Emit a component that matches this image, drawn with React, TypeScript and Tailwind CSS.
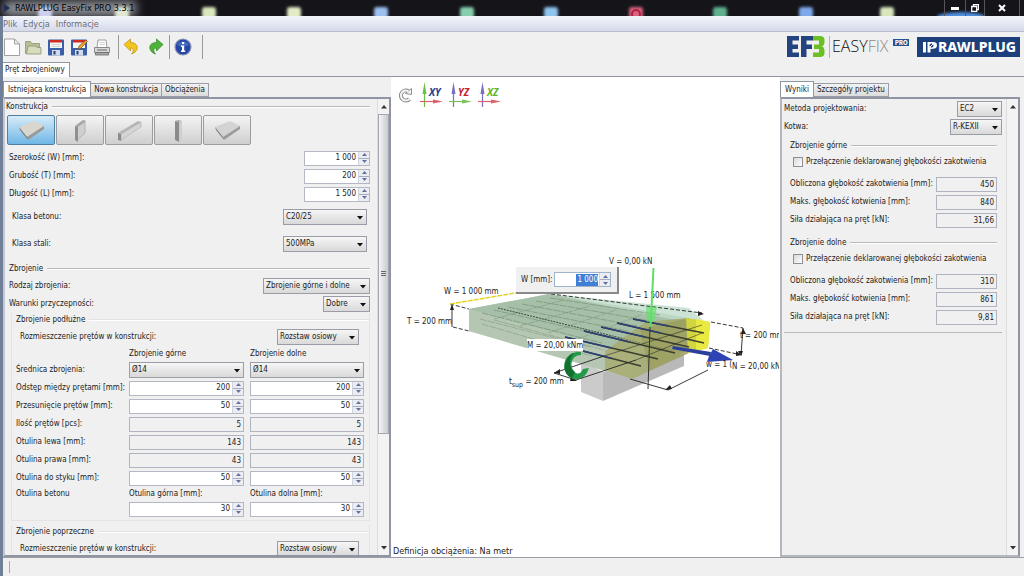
import { useId, type ReactNode } from "react";

const caret = (
  <svg className="pointer-events-none absolute right-1 top-1/2 -translate-y-px" width="6" height="4" viewBox="0 0 6 4">
    <path d="M0 0h6L3 3.5z" fill="#111" />
  </svg>
);

function Pick({ id, value, className, label }: { id: string; value: string; className: string; label?: string }) {
  return (
    <span className={`relative flex h-4 ${className}`}>
      <select
        id={id}
        aria-label={label}
        className="w-full appearance-none border border-[#9a9ca6] bg-linear-to-b from-[#f6f6f6] to-[#d9d9d9] pl-[2px] pr-2 text-[#222] outline-none"
      >
        <option>{value}</option>
      </select>
      {caret}
    </span>
  );
}

function Arrows() {
  return (
    <span className="flex h-full w-[11px] shrink-0 flex-col border-l border-[#d0d4de] bg-[#ecedf2]">
      <button aria-label="Zwiększ" className="flex flex-1 items-center justify-center border-b border-[#a4abc4]">
        <svg width="5" height="3" viewBox="0 0 5 3"><path d="M2.5 0L5 3H0z" fill="#66709a" /></svg>
      </button>
      <button aria-label="Zmniejsz" className="flex flex-1 items-center justify-center">
        <svg width="5" height="3" viewBox="0 0 5 3"><path d="M2.5 3L5 0H0z" fill="#66709a" /></svg>
      </button>
    </span>
  );
}

function Spin({ id, value, className, label }: { id: string; value: string; className: string; label?: string }) {
  return (
    <span className={`flex h-[15px] items-center border border-[#b4b8c4] bg-white ${className}`}>
      <input id={id} aria-label={label} defaultValue={value} className="min-w-0 flex-1 bg-transparent pr-[2px] text-right text-[#222] outline-none" />
      <Arrows />
    </span>
  );
}

function ReadOnly({ id, value, className, label }: { id: string; value: string; className: string; label?: string }) {
  return (
    <input
      id={id}
      aria-label={label}
      readOnly
      value={value}
      className={`h-[15px] border border-[#b0b4c0] bg-[#f0f0f0] pr-[2px] text-right text-[#222] outline-none ${className}`}
    />
  );
}

function GroupTitle({ children, className = "", faint = false }: { children: ReactNode; className?: string; faint?: boolean }) {
  return (
    <div className={`flex items-center gap-1 ${className}`}>
      <span>{children}</span>
      <span className={`h-[2px] flex-1 border-b border-white ${faint ? "bg-[#e2e2e2]" : "bg-[#b9b9b9]"}`} />
    </div>
  );
}

function Tab({ children, active = false }: { children: ReactNode; active?: boolean }) {
  return (
    <button
      role="tab"
      aria-selected={active}
      className={
        active
          ? "h-4 border border-b-0 border-[#8f95a3] bg-white px-1"
          : "h-[14px] border border-l-0 border-[#9a9ca6] bg-linear-to-b from-[#f2f2f2] to-[#dcdcdc] px-[3px]"
      }
    >
      {children}
    </button>
  );
}

const shapes: ReactNode[] = [
  <>
    <path d="M11 11L26 5 36 10 19 21z" fill="#d9d5cf" />
    <path d="M19 21L36 10v3L20 24z" fill="#9b9894" />
    <path d="M11 11l8 10 1 3-8-10z" fill="#7e7c79" />
  </>,
  <>
    <path d="M20 10l8-5v12l-8 7z" fill="#cfcfcf" stroke="#b4b4b4" />
    <path d="M18 10l3 1v15l-3-2z" fill="#8f8f8f" />
    <path d="M18 10l8-6 3 1-8 6z" fill="#a5a5a5" />
  </>,
  <>
    <path d="M15 18L35 6v5L15 24z" fill="#d4d4d4" stroke="#aaa" strokeWidth=".6" />
    <path d="M12 17L32 5l3 1-20 12z" fill="#b5b5b5" />
    <path d="M12 17l3 1v7l-3-1z" fill="#8c8c8c" />
  </>,
  <>
    <path d="M24 6l3-1v19l-3 2z" fill="#cfcfcf" />
    <path d="M20 5l4 1v20l-4-2z" fill="#8b8b8b" />
    <path d="M20 5l3-1 4 1-3 1z" fill="#aaa" />
  </>,
  <>
    <path d="M11 11L26 5 36 10 19 21z" fill="#d3d3d3" />
    <path d="M19 21L36 10v3L20 24z" fill="#9b9b9b" />
    <path d="M11 11l8 10 1 3-8-10z" fill="#7e7e7e" />
  </>,
];
const shapeNames = ["Płyta", "Ściana", "Belka", "Słup", "Płyta skośna"];

const tools: { name: string; cell: string; art: ReactNode }[] = [
  {
    name: "Nowy",
    cell: "w-[18px]",
    art: <path d="M1.5 1h10l5 5v11.5h-15zM11.5 1v5h5" fill="#fff" stroke="#8a8a8a" strokeWidth=".8" />,
  },
  {
    name: "Otwórz",
    cell: "w-[23px]",
    art: (
      <>
        <path d="M1.5 3.500h5l1 2h8v10h-14z" fill="#b7bf95" stroke="#8e9673" strokeWidth=".8" />
        <path d="M4 8h8l1 1.500h4v6.500H2.500z" fill="#d6dcbc" stroke="#8e9673" strokeWidth=".8" />
      </>
    ),
  },
  {
    name: "Zapisz",
    cell: "w-[23px]",
    art: (
      <>
        <rect x="1" y="1.500" width="16" height="16" rx="1" fill="#3a5fa8" />
        <rect x="3" y="2" width="12" height="8" fill="#f6f6f6" />
        <rect x="3" y="2" width="12" height="2.500" fill="#d22b20" />
        <path d="M4.500 6.500h9M4.500 8.500h9" stroke="#b8b8b8" strokeWidth=".6" />
        <rect x="5" y="12" width="8" height="5.500" fill="#d4dae6" />
        <rect x="6.500" y="13" width="2" height="3.500" fill="#243f7d" />
      </>
    ),
  },
  {
    name: "Zapisz jako",
    cell: "w-[23px]",
    art: (
      <>
        <rect x="1" y="1.500" width="16" height="16" rx="1" fill="#3a5fa8" />
        <rect x="3" y="2" width="12" height="8" fill="#f6f6f6" />
        <rect x="3" y="2" width="12" height="2.500" fill="#d22b20" />
        <rect x="5" y="12" width="8" height="5.500" fill="#d4dae6" />
        <rect x="6.500" y="13" width="2" height="3.500" fill="#243f7d" />
        <path d="M8 11l1-3 7-6 1.500 1.500-7 7z" fill="#f0a32c" stroke="#6b4512" strokeWidth=".6" />
      </>
    ),
  },
  {
    name: "Drukuj",
    cell: "w-[23px]",
    art: (
      <>
        <path d="M4 10l1-8h8l1 8z" fill="#fff" stroke="#888" strokeWidth=".8" />
        <path d="M6.500 4.500h5M6.300 6.500h5.500" stroke="#bbb" strokeWidth=".7" />
        <path d="M1.500 9.500h15v5h-15z" fill="#d8d8d8" stroke="#777" strokeWidth=".8" />
        <path d="M2.500 14.500h13v2.500h-13z" fill="#a9a9a9" stroke="#666" strokeWidth=".8" />
        <path d="M4 12h10" stroke="#666" />
      </>
    ),
  },
  {
    name: "Cofnij",
    cell: "ml-[5px] w-[25px] border-l border-[#9a9a9a]",
    art: <path d="M2 6.500L8.500 1v3.500c5 0 7.500 3 6.500 6.500-.7 2.500-3 4.300-5.500 5 2.500-2.500 2.500-6-1-6V13z" fill="#f2c51c" stroke="#b98d10" strokeWidth=".7" />,
  },
  {
    name: "Ponów",
    cell: "w-[26px]",
    art: <path d="M16 6.500L9.500 1v3.500c-5 0-7.500 3-6.500 6.500.7 2.500 3 4.300 5.500 5-2.500-2.500-2.500-6 1-6V13z" fill="#4db33a" stroke="#2f8421" strokeWidth=".7" />,
  },
  {
    name: "Informacje",
    cell: "w-[34px] border-x border-[#9a9a9a] pr-[6px]",
    art: (
      <>
        <circle cx="9" cy="9" r="8" fill="#2447a8" stroke="#8d97b4" strokeWidth="1.200" />
        <path d="M3 7a6.500 5.500 0 0112 0q-6 3-12 0" fill="#5b7fd4" opacity=".6" />
        <path d="M8 4h2.200v2H8zM7 7.500h3.200v5h1V14H7v-1.500h1V9H7z" fill="#fff" />
      </>
    ),
  },
];

const glows = [
  [45, "#cfd0ee"], [122, "#dfe7d0"], [209, "#dbe8bd"], [294, "#e2ecc4"], [381, "#9cc0f0"], [467, "#86cfae"],
  [551, "#8fc4ee"], [636, "#d9647c"], [720, "#5fb08c"], [806, "#7ea8ea"], [887, "#d7e6bd"],
] as const;

function TitleBar() {
  return (
    <header className="relative flex h-4 shrink-0 items-center justify-between overflow-hidden bg-[#141419] text-[9px]">
      <svg className="absolute inset-0" width="1024" height="16" viewBox="0 0 1024 16">
        <defs>
          <filter id="soft" x="-50%" y="-50%" width="200%" height="200%"><feGaussianBlur stdDeviation="1.500" /></filter>
          <filter id="wide" x="-20%" y="-80%" width="140%" height="260%"><feGaussianBlur stdDeviation="5" /></filter>
        </defs>
        <rect x="4" y="1" width="132" height="15" fill="#8e9096" filter="url(#wide)" />
        {glows.map(([x, c]) => (
          <rect key={x} x={x - 7} y="7" width="14" height="12" rx="3" fill={c} filter="url(#soft)" />
        ))}
        <circle cx="636" cy="14" r="4" fill="none" stroke="#b22045" strokeWidth="2" />
        <ellipse cx="961" cy="17" rx="24" ry="5" fill="#4f8fe0" filter="url(#soft)" />
      </svg>
      <span className="relative flex items-center gap-1 pl-[3px]">
        <svg width="8" height="10" viewBox="0 0 8 10"><path d="M1 1l6 4-6 4z" fill="#1c2f58" /></svg>
        <span className="text-black">RAWLPLUG EasyFix PRO 3.3.1</span>
      </span>
      <span className="relative flex h-full pr-1 text-white">
        <button aria-label="Minimalizuj" className="flex w-[22px] items-center justify-center border-x border-[#55565c]">
          <svg width="8" height="3"><rect width="8" height="3" fill="#fff" /></svg>
        </button>
        <button aria-label="Przywróć" className="flex w-[19px] items-center justify-center border-r border-[#55565c]">
          <svg width="8" height="8" viewBox="0 0 8 8"><path d="M2.500 2V.7h5v5H6M.7 2.500h5v5h-5z" fill="none" stroke="#fff" strokeWidth="1.300" /></svg>
        </button>
        <button aria-label="Zamknij" className="flex w-[35px] items-center justify-center border-r border-[#55565c]">
          <svg width="8" height="8" viewBox="0 0 8 8"><path d="M1 1l6 6M7 1L1 7" stroke="#fff" strokeWidth="2" /></svg>
        </button>
      </span>
    </header>
  );
}

function Brand() {
  return (
    <div className="flex items-center gap-[8px] pr-1">
      <svg width="124" height="26" viewBox="0 0 124 26" aria-label="EF3 EASYFIX PRO">
        <path d="M2 2h12v4.500H7.500v4H13V15H7.500v3.500H14V23H2zM16 2h12v4.500h-6.500v4H27V15h-5.500v8H16z" fill="#24447f" />
        <path d="M28 2h7q4.500 0 4.500 4v2.500q0 3-2.500 3.800 2.500 1 2.500 4V19q0 4-4.500 4h-7v-4.500h6V15h-5v-4.500h5v-4h-6z" fill="#6cc024" />
        <path d="M44.500 2v22" stroke="#b5b5b5" />
        <text x="47" y="18" fontSize="16" fontFamily="'Open Sans', sans-serif" fontWeight="300" fill="#111">
          EASY<tspan fill="#8c8c8c">FIX</tspan>
        </text>
        <rect x="108" y="5" width="16" height="7" fill="#24548f" />
        <text x="110" y="11" fontSize="6" fontFamily="Inter, sans-serif" fontWeight="800" fill="#fff">PRO</text>
      </svg>
      <svg width="103" height="20" viewBox="0 0 103 20" aria-label="RAWLPLUG">
        <rect width="103" height="20" fill="#1d3f7b" />
        <path d="M6 5h3v10.500H6z" fill="#fff" />
        <path d="M10.500 5h5.500q4 0 4 3.300 0 3.500-4 3.500h-2.500v3.700h-3z" fill="#fff" />
        <circle cx="14.500" cy="8.500" r="2.500" fill="#1d3f7b" stroke="#fff" />
        <path d="M13 10l3.500-3.500" stroke="#fff" />
        <text x="21" y="15" fontSize="14" fontFamily="'Noto Sans', sans-serif" fontWeight="800" fill="#fff">RAWLPLUG</text>
      </svg>
    </div>
  );
}

function UpDownBar({ thumb }: { thumb: boolean }) {
  return (
    <div className="flex w-3 shrink-0 flex-col items-center border-l border-[#dcdcdc] bg-[#f3f3f3]">
      <button aria-label="W górę" className="flex h-[15px] items-center"><svg width="6" height="4"><path d="M3 0l3 3.500H0z" fill="#333" /></svg></button>
      <div className="flex w-full flex-1 flex-col">
        {thumb && (
          <div className="flex h-3/4 w-full items-center justify-center border border-[#a4a7b2] bg-linear-to-r from-[#f5f5f5] to-[#c9cad0]">
            <svg width="5" height="6"><path d="M0 .5h5M0 2.500h5M0 4.500h5" stroke="#666" /></svg>
          </div>
        )}
      </div>
      <button aria-label="W dół" className="flex h-[15px] items-center"><svg width="6" height="4"><path d="M3 3.500L6 0H0z" fill="#333" /></svg></button>
    </div>
  );
}

function DimRow({ label, value }: { label: string; value: string }) {
  const id = useId();
  return (
    <div className="flex h-[18px] items-center justify-between pl-[3px]">
      <label htmlFor={id}>{label}</label>
      <Spin id={id} value={value} className="w-[66px]" />
    </div>
  );
}

function PickRow({ label, value, width, className = "h-[18px] pl-[3px]" }: { label: string; value: string; width: string; className?: string }) {
  const id = useId();
  return (
    <div className={`flex items-center justify-between ${className}`}>
      <label htmlFor={id}>{label}</label>
      <Pick id={id} value={value} className={width} />
    </div>
  );
}

const pairRows: { label: string; value: string; kind: "spin" | "read" | "pick" }[] = [
  { label: "Średnica zbrojenia:", value: "Ø14", kind: "pick" },
  { label: "Odstęp między prętami [mm]:", value: "200", kind: "spin" },
  { label: "Przesunięcie prętów [mm]:", value: "50", kind: "spin" },
  { label: "Ilość prętów [pcs]:", value: "5", kind: "read" },
  { label: "Otulina lewa [mm]:", value: "143", kind: "read" },
  { label: "Otulina prawa [mm]:", value: "43", kind: "read" },
  { label: "Otulina do styku [mm]:", value: "50", kind: "spin" },
];

const pairGrid = "grid grid-cols-[107px_115px_114px] items-center gap-x-[6px]";

function PairRow({ label, value, kind }: { label: string; value: string; kind: "spin" | "read" | "pick" }) {
  const id = useId();
  const Field = kind === "spin" ? Spin : kind === "read" ? ReadOnly : Pick;
  return (
    <div className={`${pairGrid} h-[18px]`}>
      <label htmlFor={id} className="whitespace-nowrap">{label}</label>
      <Field id={id} value={value} className="w-full" />
      <Field id={`${id}-b`} label={`${label} dolne`} value={value} className="w-full" />
    </div>
  );
}

function LeftPanel() {
  const id = useId();
  return (
    <section className="flex w-[388px] shrink-0 flex-col pt-1">
      <div role="tablist" className="flex items-end">
        <Tab active>Istniejąca konstrukcja</Tab>
        <Tab>Nowa konstrukcja</Tab>
        <Tab>Obciążenia</Tab>
      </div>
      <div className="flex min-h-0 flex-1 overflow-hidden border-2 border-[#8f95a3] border-l-[#c4c7cf] bg-[#f0f0f0]">
        <div className="min-w-0 flex-1 overflow-hidden pl-px pr-[7px]">
          <GroupTitle className="h-4">Konstrukcja</GroupTitle>
          <div className="flex gap-px pl-px">
            {shapes.map((art, i) => (
              <button
                key={shapeNames[i]}
                aria-label={shapeNames[i]}
                className={
                  i === 0
                    ? "h-[30px] w-12 rounded-[2px] border border-[#4d7fa3] bg-linear-to-b from-[#d6ecf8] to-[#6fb6e6]"
                    : "h-[30px] w-12 rounded-[2px] border border-[#9c9c9c] bg-linear-to-b from-[#f4f4f4] to-[#cfcfcf]"
                }
              >
                <svg width="46" height="28" viewBox="0 0 46 28">{art}</svg>
              </button>
            ))}
          </div>
          <div className="pt-1">
            <DimRow label="Szerokość (W) [mm]:" value="1 000" />
            <DimRow label="Grubość (T) [mm]:" value="200" />
            <DimRow label="Długość (L) [mm]:" value="1 500" />
          </div>
          <PickRow label="Klasa betonu:" value="C20/25" width="w-[84px]" className="h-[27px] pl-[6px] pr-[3px]" />
          <PickRow label="Klasa stali:" value="500MPa" width="w-[84px]" className="h-[27px] pl-[6px] pr-[3px]" />
          <GroupTitle className="mt-1 h-4 pl-[3px]">Zbrojenie</GroupTitle>
          <PickRow label="Rodzaj zbrojenia:" value="Zbrojenie górne i dolne" width="w-[107px]" />
          <PickRow label="Warunki przyczepności:" value="Dobre" width="w-[47px]" />
          <div className="ml-[5px] border-x border-b border-[#e4e4e4] pb-[2px] pl-1">
            <GroupTitle faint className="h-[14px]">Zbrojenie podłużne</GroupTitle>
            <PickRow label="Rozmieszczenie prętów w konstrukcji:" value="Rozstaw osiowy" width="w-[82px]" className="h-5 pl-1 pr-[10px]" />
            <div className={`${pairGrid} h-[14px]`}>
              <span />
              <span>Zbrojenie górne</span>
              <span>Zbrojenie dolne</span>
            </div>
            {pairRows.map((r) => <PairRow key={r.label} {...r} />)}
            <div className={`${pairGrid} h-[13px]`}>
              <span>Otulina betonu</span>
              <label htmlFor={`${id}-g`}>Otulina górna [mm]:</label>
              <label htmlFor={`${id}-d`}>Otulina dolna [mm]:</label>
            </div>
            <div className={`${pairGrid} h-[18px]`}>
              <span />
              <Spin id={`${id}-g`} value="30" className="w-full" />
              <Spin id={`${id}-d`} value="30" className="w-full" />
            </div>
          </div>
          <div className="ml-[5px] mt-1 border-x border-[#e4e4e4] pl-1">
            <GroupTitle faint className="h-[14px]">Zbrojenie poprzeczne</GroupTitle>
            <PickRow label="Rozmieszczenie prętów w konstrukcji:" value="Rozstaw osiowy" width="w-[82px]" className="h-5 pl-1 pr-[10px]" />
          </div>
        </div>
        <UpDownBar thumb />
      </div>
    </section>
  );
}

const axes = [
  { name: "XY", up: "#6cc04a", side: "#e0606a", ink: "#2b3a8c" },
  { name: "YZ", up: "#7a6fc0", side: "#7cc35a", ink: "#c8202c" },
  { name: "XZ", up: "#7a6fc0", side: "#e0606a", ink: "#5fb52e" },
];

const rods = [
  [633, 320, 704, 334],
  [617, 324, 704, 344],
  [601, 328, 689, 348],
  [584, 332, 675, 354],
  [565, 338, 658, 360],
  [583, 352, 641, 367],
];

function Scene() {
  return (
    <svg className="absolute left-0 top-0" width="388" height="480" viewBox="391 78 388 480" fontSize="8" fill="#222">
      <path d="M581 362l22 11v29l-22-9z" fill="#cbcbcb" />
      <path d="M603 373l81-18v12l-81 35z" fill="#b9b9b9" />
      <path d="M469 310L549 295 700 321 690 350 632 380 469 332z" fill="#b0c4ae" />
      <path d="M469 310L549 295 700 321 622 352z" fill="#a3bda6" opacity=".75" />
      <path d="M469 310v22l163 48v-26z" fill="#b9cab4" opacity=".6" />
      <path d="M549 295l140 14 14 12-33-1z" fill="#c0dccb" opacity=".8" />
      <g stroke="#7d957d" strokeWidth=".8" fill="none" strokeDasharray="7 1">
        <path d="M482 314l120 30M494 311l120 28M508 308l120 24M522 305l115 22M536 302l115 20M550 299l110 17" />
        <path d="M482 325l110 32M494 321l110 30M480 320l110 28" opacity=".7" />
        <path d="M494 320l70-19M520 327l70-20M548 334l68-23M575 341l66-25" opacity=".7" />
      </g>
      <path d="M498 309l176 43" stroke="#384838" strokeDasharray="2 1" />
      <path d="M605 352l40-29 44-4v35l-57 26-27-9z" fill="#a6a762" opacity=".7" />
      <path d="M640 330l49-11v35l-40 18z" fill="#8a8c42" opacity=".35" />
      <path d="M686 319l24 4-2 26-20 5z" fill="#d2d540" />
      <path d="M696 320l14 3-2 26-12 3z" fill="#e8ea42" />
      <g strokeWidth="1.600">
        {rods.map(([a, b, c, d]) => (
          <g key={a}>
            <path d={`M${a} ${b}L${c} ${d}`} stroke="#3a4030" />
            <path d={`M${a} ${b}L${(a + c) / 2} ${(b + d) / 2}`} stroke="#2c3f78" />
          </g>
        ))}
      </g>
      <g stroke="#222" fill="none" strokeWidth=".9">
        <path d="M551 295l151 19M450 305l19 5M453 328l16 4M711 323l32 6M709 349l33 7" strokeDasharray="4 2" />
        <path d="M452 306v22M743 329l-2 27M554 374l22 7M554 374l50-17M576 381l60-20M630 380l38 11 40-20" />
        <path d="M604 357l98-31M636 361l66-27" opacity=".6" />
        <path d="M450 305l71-12" stroke="#e4d32c" strokeDasharray="5 1" strokeWidth="1.500" />
      </g>
      <path d="M452 305l-2 6h4zM704 315l-6-3v5zM743 329l-2 6h5zM741 357l-3-5h5zM742 356l-6-4v5zM554 374l6-4v5zM577 382l-6-4-1 4zM665 391l5-5 2 4z" />
      <path d="M650 328l-2 62" stroke="#333" />
      <text x="629" y="299">L = 1 500 mm</text>
      <path d="M653.500 269L650.500 328" stroke="#62dc62" strokeWidth="2" />
      <path d="M646 308h11l-3 15h-7z" fill="#5fe06a" opacity=".65" />
      <path d="M581 353C562 351 559 374 573 380Q585 382 589 369L583 370Q580 376 576 374C569 370 570 356 581 356z" fill="#23994a" />
      <path d="M573 354C562 361 562 375 572 379L575 373C568 368 569 360 574 354z" fill="#14702f" />
      <path d="M672 350l1-3 38 6-1 4z" fill="#2a3f9e" />
      <path d="M713 350l20 11-26 2 2-6z" fill="#2e44b4" />
      <rect x="527" y="340" width="56" height="12" fill="#fff" />
      <text x="444" y="295">W = 1 000 mm</text>
      <text x="407" y="325">T = 200 mm</text>
      <text x="527" y="349">M = 20,00 kNm</text>
      <text x="509" y="385">t<tspan dy="3" fontSize="7">sup</tspan><tspan dy="-3"> = 200 mm</tspan></text>
      <text x="609" y="265">V = 0,00 kN</text>
      <text x="740" y="339">t = 200 mm</text>
      <text x="706" y="368">w = 1 (</text>
      <text x="732" y="370">N = 20,00 kN</text>
    </svg>
  );
}

function Viewport() {
  return (
    <main className="relative flex min-w-0 flex-1 flex-col overflow-hidden bg-white pl-[2px]">
      <Scene />
      <div className="relative flex items-center gap-[6px] pl-[3px] pt-[5px]">
        <button aria-label="Obróć" className="flex">
          <svg width="18" height="20" viewBox="0 0 18 20">
            <path d="M12.500 6.200A5 5 0 1013.500 14" fill="none" stroke="#858585" strokeWidth="4" />
            <path d="M9.500 8.500l6-5v6z" fill="#f4f4f4" stroke="#858585" strokeWidth=".9" />
            <path d="M12.500 6.200A5 5 0 1013.500 14" fill="none" stroke="#f4f4f4" strokeWidth="2.200" />
          </svg>
        </button>
        {axes.map((a) => (
          <button key={a.name} aria-label={a.name} className="flex">
            <svg width="23" height="26" viewBox="0 0 23 26">
              <path d="M4.500 25V6" stroke={a.up} strokeWidth="1.200" />
              <path d="M4.500 0l2 12h-4z" fill={a.up} />
              <path d="M0 19.500h18" stroke={a.side} strokeWidth="1.200" />
              <path d="M23 19.500l-10-2v4z" fill={a.side} />
              <text x="9" y="14" fontSize="10" fontWeight="700" fontStyle="italic" fontFamily="'Open Sans', sans-serif" fill={a.ink}>{a.name}</text>
            </svg>
          </button>
        ))}
      </div>
      <div className="absolute left-[125px] top-[190px] flex h-[27px] w-[103px] items-center gap-[2px] border-b-2 border-r-2 border-[#8a8a8a] bg-[#f0f0f0] pl-[5px]">
        <label htmlFor="dim-w">W [mm]:</label>
        <span className="flex h-[15px] flex-1 items-center border border-[#9fb4cc] bg-white">
          <span className="flex flex-1 justify-end pr-px">
            <input id="dim-w" defaultValue="1 000" className="w-[22px] bg-[#3f7fd6] text-right text-white outline-none" />
          </span>
          <Arrows />
        </span>
        <span className="w-1" />
      </div>
      <p className="relative mt-auto text-[9px]">Definicja obciążenia: Na metr</p>
    </main>
  );
}

function ResultGroup({ title, rows }: { title: string; rows: [string, string][] }) {
  const id = useId();
  return (
    <div className="pl-[6px] pr-[5px]">
      <GroupTitle className="h-[18px]">{title}</GroupTitle>
      <div className="mb-[6px] flex h-[14px] items-center gap-[3px] pl-[3px]">
        <input id={id} type="checkbox" className="size-[10px] appearance-none border border-[#8c8f99] bg-linear-to-br from-[#d8d8d8] to-white" />
        <label htmlFor={id} className="whitespace-nowrap">Przełączenie deklarowanej głębokości zakotwienia</label>
      </div>
      {rows.map(([label, value], i) => (
        <div key={label} className="flex h-[18px] items-center justify-between">
          <label htmlFor={`${id}-${i}`} className="whitespace-nowrap">{label}</label>
          <ReadOnly id={`${id}-${i}`} value={value} className="w-[61px]" />
        </div>
      ))}
    </div>
  );
}

function RightPanel() {
  return (
    <section className="flex w-[244px] shrink-0 flex-col bg-[#f0f0f0] pr-1 pt-1">
      <div role="tablist" className="flex items-end">
        <Tab active>Wyniki</Tab>
        <Tab>Szczegóły projektu</Tab>
      </div>
      <div className="flex min-h-0 flex-1 border-2 border-[#8f95a3] border-l-[#b5b7bf] border-b-[#b5b7bf]">
        <div className="flex min-w-0 flex-1 flex-col pl-[2px] pr-1">
          <PickRow label="Metoda projektowania:" value="EC2" width="w-[45px]" className="mt-px h-[18px]" />
          <PickRow label="Kotwa:" value="R-KEXII" width="w-[52px]" className="h-[18px]" />
          <div className="mt-px flex flex-col gap-[5px] border-b border-[#b9b9b9] pb-[6px]">
            <ResultGroup
              title="Zbrojenie górne"
              rows={[["Obliczona głębokość zakotwienia [mm]:", "450"], ["Maks. głębokość kotwienia [mm]:", "840"], ["Siła działająca na pręt [kN]:", "31,66"]]}
            />
            <ResultGroup
              title="Zbrojenie dolne"
              rows={[["Obliczona głębokość zakotwienia [mm]:", "310"], ["Maks. głębokość kotwienia [mm]:", "861"], ["Siła działająca na pręt [kN]:", "9,81"]]}
            />
          </div>
        </div>
        <UpDownBar thumb={false} />
      </div>
    </section>
  );
}

export default function App() {
  return (
    <div className="flex h-screen flex-col overflow-hidden bg-[#f0f0f0] font-['DejaVu_Sans_Condensed','DejaVu_Sans',sans-serif] text-[8px] leading-[12px] text-[#222]">
      <TitleBar />
      <div className="flex min-h-0 flex-1 flex-col border-l-[3px] border-[#6f7f98]">
        <nav className="flex h-4 shrink-0 items-center gap-[6px] border-b border-[#b9bccb] bg-linear-to-b from-[#f4f5fa] to-[#d5daea] text-[9px] text-[#6a6c76]">
          <button>Plik</button>
          <button>Edycja</button>
          <button>Informacje</button>
        </nav>
        <div className="flex h-[30px] shrink-0 items-center justify-between">
          <div className="flex">
            {tools.map((t) => (
              <button key={t.name} aria-label={t.name} className={`flex h-6 items-center justify-center ${t.cell}`}>
                <svg width="18" height="19" viewBox="0 0 18 19">{t.art}</svg>
              </button>
            ))}
          </div>
          <Brand />
        </div>
        <div role="tablist" className="flex h-[15px] shrink-0">
          <button role="tab" aria-selected="true" className="border-r border-t border-[#8f95a3] bg-white pl-[2px] pr-1">Pręt zbrojeniowy</button>
          <span className="flex-1 border-b border-[#8f95a3]" />
        </div>
        <div className="flex min-h-0 flex-1 border-b border-[#9a9ca6]">
          <LeftPanel />
          <Viewport />
          <RightPanel />
        </div>
        <footer className="flex h-[18px] shrink-0 items-center pl-[6px]">
          <span className="h-3 border-l border-[#a8a8a8]" />
        </footer>
      </div>
    </div>
  );
}
